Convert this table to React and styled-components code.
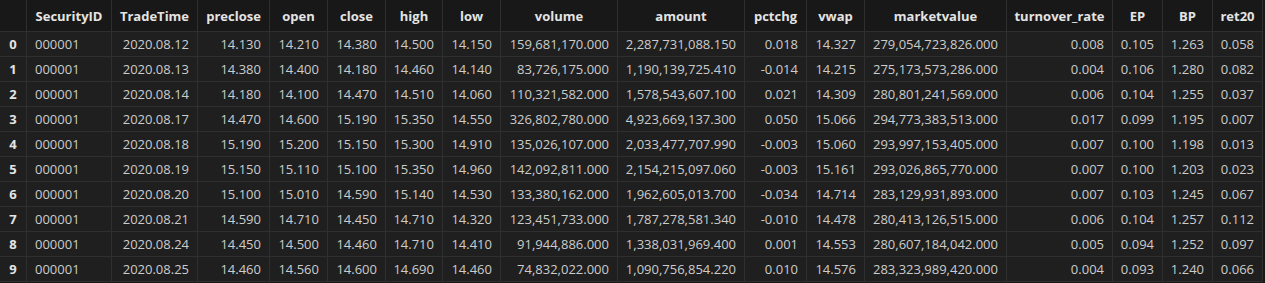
import React from "react";
import styled, { createGlobalStyle } from "styled-components";

const GlobalStyle = createGlobalStyle`
  html, body {
    margin: 0;
    padding: 0;
    background: #181818;
  }
  body {
    font-family: "Open Sans", "Noto Sans", sans-serif;
  }
`;

const columns = [
  { key: "SecurityID", width: 85, align: "left" },
  { key: "TradeTime", width: 86 },
  { key: "preclose", width: 72 },
  { key: "open", width: 58 },
  { key: "close", width: 58 },
  { key: "high", width: 57 },
  { key: "low", width: 58 },
  { key: "volume", width: 117 },
  { key: "amount", width: 127 },
  { key: "pctchg", width: 62 },
  { key: "vwap", width: 58 },
  { key: "marketvalue", width: 142 },
  { key: "turnover_rate", width: 106 },
  { key: "EP", width: 50 },
  { key: "BP", width: 50 },
  { key: "ret20", width: 50 },
];

const rows = [
  ["000001", "2020.08.12", "14.130", "14.210", "14.380", "14.500", "14.150", "159,681,170.000", "2,287,731,088.150", "0.018", "14.327", "279,054,723,826.000", "0.008", "0.105", "1.263", "0.058"],
  ["000001", "2020.08.13", "14.380", "14.400", "14.180", "14.460", "14.140", "83,726,175.000", "1,190,139,725.410", "-0.014", "14.215", "275,173,573,286.000", "0.004", "0.106", "1.280", "0.082"],
  ["000001", "2020.08.14", "14.180", "14.100", "14.470", "14.510", "14.060", "110,321,582.000", "1,578,543,607.100", "0.021", "14.309", "280,801,241,569.000", "0.006", "0.104", "1.255", "0.037"],
  ["000001", "2020.08.17", "14.470", "14.600", "15.190", "15.350", "14.550", "326,802,780.000", "4,923,669,137.300", "0.050", "15.066", "294,773,383,513.000", "0.017", "0.099", "1.195", "0.007"],
  ["000001", "2020.08.18", "15.190", "15.200", "15.150", "15.300", "14.910", "135,026,107.000", "2,033,477,707.990", "-0.003", "15.060", "293,997,153,405.000", "0.007", "0.100", "1.198", "0.013"],
  ["000001", "2020.08.19", "15.150", "15.110", "15.100", "15.350", "14.960", "142,092,811.000", "2,154,215,097.060", "-0.003", "15.161", "293,026,865,770.000", "0.007", "0.100", "1.203", "0.023"],
  ["000001", "2020.08.20", "15.100", "15.010", "14.590", "15.140", "14.530", "133,380,162.000", "1,962,605,013.700", "-0.034", "14.714", "283,129,931,893.000", "0.007", "0.103", "1.245", "0.067"],
  ["000001", "2020.08.21", "14.590", "14.710", "14.450", "14.710", "14.320", "123,451,733.000", "1,787,278,581.340", "-0.010", "14.478", "280,413,126,515.000", "0.006", "0.104", "1.257", "0.112"],
  ["000001", "2020.08.24", "14.450", "14.500", "14.460", "14.710", "14.410", "91,944,886.000", "1,338,031,969.400", "0.001", "14.553", "280,607,184,042.000", "0.005", "0.094", "1.252", "0.097"],
  ["000001", "2020.08.25", "14.460", "14.560", "14.600", "14.690", "14.460", "74,832,022.000", "1,090,756,854.220", "0.010", "14.576", "283,323,989,420.000", "0.004", "0.093", "1.240", "0.066"],
];

const INDEX_WIDTH = 27;

const Table = styled.div`
  display: grid;
  grid-template-columns: ${({ $template }) => $template};
  grid-template-rows: 32px;
  grid-auto-rows: 25px;
  width: max-content;
  font-size: 13px;
  color: #cccccc;
`;

const Cell = styled.div`
  box-sizing: border-box;
  display: flex;
  align-items: center;
  border-right: 1px solid #2f2f2f;
  border-bottom: 1px solid #2f2f2f;
  white-space: nowrap;
  overflow: hidden;
`;

const HeaderCell = styled(Cell)`
  justify-content: center;
  background: #181818;
  color: #e4e4e4;
  font-weight: 700;
  padding: 0 4px;
`;

const IndexCell = styled(Cell)`
  justify-content: center;
  background: #1f1f1f;
  color: #e4e4e4;
  font-weight: 700;
`;

const DataCell = styled(Cell)`
  background: #1f1f1f;
  justify-content: ${({ $align }) => ($align === "left" ? "flex-start" : "flex-end")};
  padding: ${({ $align }) => ($align === "left" ? "0 8px 0 8px" : "0 8px 0 4px")};
`;

export default function App() {
  const template = [INDEX_WIDTH, ...columns.map((c) => c.width)]
    .map((w) => `${w}px`)
    .join(" ");
  return (
    <>
      <GlobalStyle />
      <Table $template={template}>
        <HeaderCell />
        {columns.map((c) => (
          <HeaderCell key={c.key}>{c.key}</HeaderCell>
        ))}
        {rows.map((row, i) => (
          <React.Fragment key={i}>
            <IndexCell>{i}</IndexCell>
            {row.map((v, j) => (
              <DataCell key={j} $align={columns[j].align}>
                {v}
              </DataCell>
            ))}
          </React.Fragment>
        ))}
      </Table>
    </>
  );
}
